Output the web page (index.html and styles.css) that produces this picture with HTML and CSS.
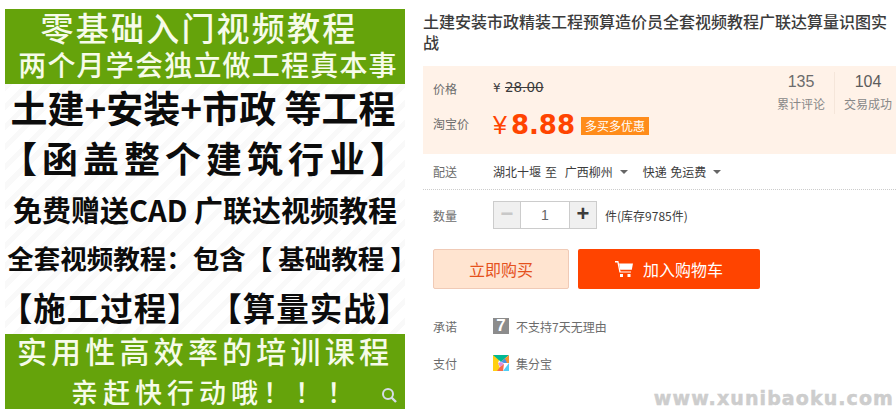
FILE: index.html
```html
<!DOCTYPE html>
<html>
<head>
    <title>土建安装市政精装工程预算造价员全套视频教程</title>
    <link rel="stylesheet" href="styles.css">
</head>
<body>
    <div class="page">
        <div class="poster">
            <div class="band band-top">
                <div class="line l1">零基础入门视频教程</div>
                <div class="line l2">两个月学会独立做工程真本事</div>
            </div>
            <div class="poster-body">
                <div class="line b1">土建+安装+市政 等工程</div>
                <div class="line b2">【函盖整个建筑行业】</div>
                <div class="line b3">免费赠送CAD 广联达视频教程</div>
                <div class="line b4">全套视频教程：包含【 基础教程 】</div>
                <div class="line b5">【施工过程】 【算量实战】</div>
            </div>
            <div class="band band-bottom">
                <div class="line l3">实用性高效率的培训课程</div>
                <div class="line l4">亲赶快行动哦！！！</div>
                <svg class="zoom-icon" width="18" height="18" viewBox="0 0 18 18">
                    <circle cx="8" cy="8" r="5" fill="none" stroke="#d5dce8" stroke-width="2"/>
                    <path d="M11.5 11.5L16 16" stroke="#d5dce8" stroke-width="2.4"/>
                </svg>
            </div>
        </div>

        <div class="detail">
            <h1 class="title">土建安装市政精装工程预算造价员全套视频教程广联达算量识图实战</h1>

            <div class="price-box">
                <div class="stats">
                    <div class="stat">
                        <div class="stat-num">135</div>
                        <div class="stat-label">累计评论</div>
                    </div>
                    <div class="stat">
                        <div class="stat-num dark">104</div>
                        <div class="stat-label">交易成功</div>
                    </div>
                </div>
                <div class="price-row old-row">
                    <span class="label">价格</span>
                    <span class="old-price"><span class="yen">¥</span> <s>28.00</s></span>
                </div>
                <div class="price-row now-row">
                    <span class="label">淘宝价</span>
                    <span class="now-yen">¥</span>
                    <span class="now-price">8.88</span>
                    <span class="promo">多买多优惠</span>
                </div>
            </div>

            <div class="row ship-row">
                <span class="label">配送</span>
                <span class="value ship-to">湖北十堰 至&nbsp; 广西柳州</span>
                <i class="caret"></i>
                <span class="value ship-type">快递 免运费</span>
                <i class="caret"></i>
            </div>

            <div class="row qty-row">
                <span class="label">数量</span>
                <div class="stepper">
                    <span class="step minus">−</span>
                    <span class="qty">1</span>
                    <span class="step plus">+</span>
                </div>
                <span class="value stock">件(库存9785件)</span>
            </div>

            <div class="actions">
                <a class="btn btn-buy">立即购买</a>
                <a class="btn btn-cart">
                    <svg width="18" height="16" viewBox="0 0 18 16">
                        <path d="M0 0h3.4l2.2 10.4H16v1.2H4.4L2.4 1.4H0z" fill="#fff"/>
                        <path d="M4 2.4h14l-1.2 6.4H5.2z" fill="#fff"/>
                        <rect x="5" y="13" width="3" height="3" fill="#fff"/>
                        <rect x="12.5" y="13" width="3" height="3" fill="#fff"/>
                    </svg>
                    <span>加入购物车</span>
                </a>
            </div>

            <div class="row promise-row">
                <span class="label">承诺</span>
                <span class="badge-seven">7</span>
                <span class="value muted">不支持7天无理由</span>
            </div>

            <div class="row pay-row">
                <span class="label">支付</span>
                <svg class="pay-icon" width="16" height="16" viewBox="0 0 16 16">
                    <rect width="16" height="16" fill="#fff"/>
                    <polygon points="0,0 8,0 5,8 8,16 0,16" fill="#ffd012"/>
                    <polygon points="0,0 16,0 8,7" fill="#00b894"/>
                    <polygon points="16,0 16,8 12,8 9,6" fill="#f5932e"/>
                    <polygon points="8,7 12,3.6 14,8 11,8" fill="#4a90e2"/>
                    <polygon points="5,8 8,7 11,9 7,12" fill="#d98fe0"/>
                    <polygon points="16,8 16,16 10,16" fill="#4fcdf5"/>
                    <polygon points="7,12 11,9 10,16 4,16" fill="#f56a4a"/>
                </svg>
                <span class="value muted">集分宝</span>
            </div>
        </div>
    </div>
    <div class="watermark">www.xunibaoku.com</div>
</body>
</html>
```

FILE: styles.css
```css
html, body {
    margin: 0;
    height: 410px;
    overflow: hidden;
    background-color: #fff;
}
body {
    font-family: "Noto Sans CJK SC", "Liberation Sans", sans-serif;
    font-size: 12px;
    color: #3c3c3c;
}
.page {
    display: flex;
    padding: 9px 0 0 5px;
}

/* left poster */
.poster {
    width: 400px;
    height: 400px;
    flex: none;
    display: flex;
    flex-direction: column;
    font-weight: 700;
    white-space: nowrap;
}
.band {
    position: relative;
    height: 75px;
    flex: none;
    background-color: #65a30b;
    color: #f6fbe9;
}
.poster-body {
    flex: 1;
    color: #0c0c0c;
    background-color: #fff;
    background-image: repeating-linear-gradient(135deg, #f9f9f9 0, #f9f9f9 5px, #fff 5px, #fff 14px);
}
.line {
    display: flex;
    justify-content: center;
}
.l1 {
    font-size: 33px;
    line-height: 36px;
    letter-spacing: 2.2px;
    font-weight: 500;
    margin-right: 12px;
}
.l2 {
    font-size: 28px;
    line-height: 36px;
    letter-spacing: 1.2px;
    font-weight: 500;
    margin: 1px 0 0 6px;
}
.b1 {
    font-size: 37px;
    line-height: 48px;
    margin: -1px 0 0 -4px;
}
.b2 {
    font-size: 36px;
    line-height: 52px;
    letter-spacing: 5px;
    margin-left: 2px;
}
.b3 {
    font-size: 29px;
    line-height: 52px;
}
.b4 {
    font-size: 26.5px;
    line-height: 46px;
    margin-left: 14px;
}
.b5 {
    font-size: 32.5px;
    line-height: 52px;
    letter-spacing: 1px;
}
.l3 {
    font-size: 30px;
    line-height: 40px;
    letter-spacing: 4.2px;
    font-weight: 500;
    margin-top: -4px;
}
.l4 {
    font-size: 27px;
    line-height: 36px;
    letter-spacing: 5px;
    font-weight: 500;
    margin: 4px 0 0 20px;
}
.zoom-icon {
    position: absolute;
    right: 7px;
    bottom: 5px;
}

/* right column */
.detail {
    width: 473px;
    margin-left: 18px;
    flex: none;
}
.title {
    margin: 0;
    font-size: 16px;
    line-height: 21px;
    font-weight: 500;
    color: #3c3c3c;
    padding-top: 2px;
    height: 55px;
}
.price-box {
    position: relative;
    height: 88px;
    background-color: #fff2e8;
    padding-left: 10px;
    box-sizing: border-box;
}
.label {
    display: inline-block;
    width: 60px;
    flex: none;
    color: #6c6c6c;
    font-size: 12px;
}
.price-row {
    display: flex;
    align-items: center;
}
.old-row {
    height: 44px;
}
.old-price {
    font-family: "DejaVu Sans", sans-serif;
    font-size: 13.5px;
    color: #3c3c3c;
    margin-top: -2px;
}
.old-price .yen {
    font-size: 12px;
}
.now-row {
    height: 36px;
    margin-top: -3px;
}
.now-row .label {
    margin-top: -3px;
}
.now-yen {
    font-family: "Liberation Sans", sans-serif;
    color: #ff4400;
    font-size: 25px;
    margin-right: 4px;
}
.now-price {
    font-family: "DejaVu Sans", sans-serif;
    font-weight: 700;
    color: #ff4400;
    font-size: 26px;
}
.promo {
    margin-left: 6px;
    background-color: #ff8c1a;
    color: #fff;
    font-size: 12px;
    line-height: 18px;
    padding: 0 4px;
    margin-top: 2px;
}
.stats {
    position: absolute;
    top: 6px;
    right: 0;
    display: flex;
}
.stat {
    width: 56px;
    height: 42px;
    text-align: center;
    color: #888;
}
.stat:first-child {
    width: 66px;
    margin-right: 5px;
    border-right: 1px solid #f5e6da;
}
.stat-num {
    font-family: "Liberation Sans", sans-serif;
    font-size: 16px;
    line-height: 20px;
    color: #6c6c6c;
}
.stat-num.dark {
    color: #5c5c5c;
}
.stat-label {
    font-size: 12px;
    line-height: 20px;
    margin-top: 2px;
}

.row {
    display: flex;
    align-items: center;
    padding-left: 10px;
}
.value {
    color: #3c3c3c;
    font-size: 12px;
}
.caret {
    display: inline-block;
    width: 0;
    height: 0;
    border: 4px solid transparent;
    border-top: 4px solid #666;
    border-bottom: none;
    margin-left: 7px;
}
.ship-row {
    height: 35px;
    border-bottom: 1px dotted #ccc;
}
.ship-to {
    word-spacing: 1.2px;
}
.ship-type {
    margin-left: 15px;
    word-spacing: 1px;
}
.qty-row {
    margin-top: 11px;
    height: 28px;
}
.stepper {
    display: flex;
    width: 104px;
    height: 28px;
    box-sizing: border-box;
    border: 1px solid #ccc;
}
.step {
    width: 26px;
    background-color: #f0f0f0;
    font-family: "Liberation Sans", sans-serif;
    font-size: 22px;
    font-weight: 700;
    line-height: 24px;
    text-align: center;
}
.minus {
    color: #c8c8c8;
    border-right: 1px solid #ccc;
}
.plus {
    color: #3c3c3c;
    border-left: 1px solid #ccc;
}
.qty {
    flex: 1;
    text-align: center;
    font-family: "Liberation Sans", sans-serif;
    font-size: 14px;
    line-height: 26px;
    color: #666;
}
.stock {
    margin-left: 8px;
}
.actions {
    display: flex;
    margin: 20px 0 0 10px;
}
.btn {
    display: flex;
    align-items: center;
    justify-content: center;
    height: 40px;
    box-sizing: border-box;
    border-radius: 2px;
    font-size: 16px;
}
.btn-buy {
    width: 136px;
    background-color: #ffe4d0;
    border: 1px solid #f0cab6;
    color: #e5511d;
}
.btn-cart {
    width: 182px;
    margin-left: 9px;
    background-color: #ff4400;
    color: #fff;
    gap: 10px;
}
.promise-row {
    margin-top: 28px;
    height: 18px;
}
.pay-row {
    margin-top: 19px;
    height: 18px;
}
.badge-seven {
    width: 16px;
    height: 16px;
    background-color: #8c8c8c;
    color: #fff;
    font-family: "Liberation Sans", sans-serif;
    font-size: 17px;
    font-weight: 700;
    line-height: 16px;
    text-align: center;
}
.muted {
    color: #6c6c6c;
    margin-left: 7px;
}
.pay-icon {
    flex: none;
}
.watermark {
    position: absolute;
    right: 2px;
    bottom: 0;
    font-family: "DejaVu Sans", sans-serif;
    font-weight: 700;
    font-size: 19px;
    line-height: 24px;
    letter-spacing: 1.1px;
    color: #cdcdcd;
    -webkit-text-stroke: 0.5px #cdcdcd;
}
```
